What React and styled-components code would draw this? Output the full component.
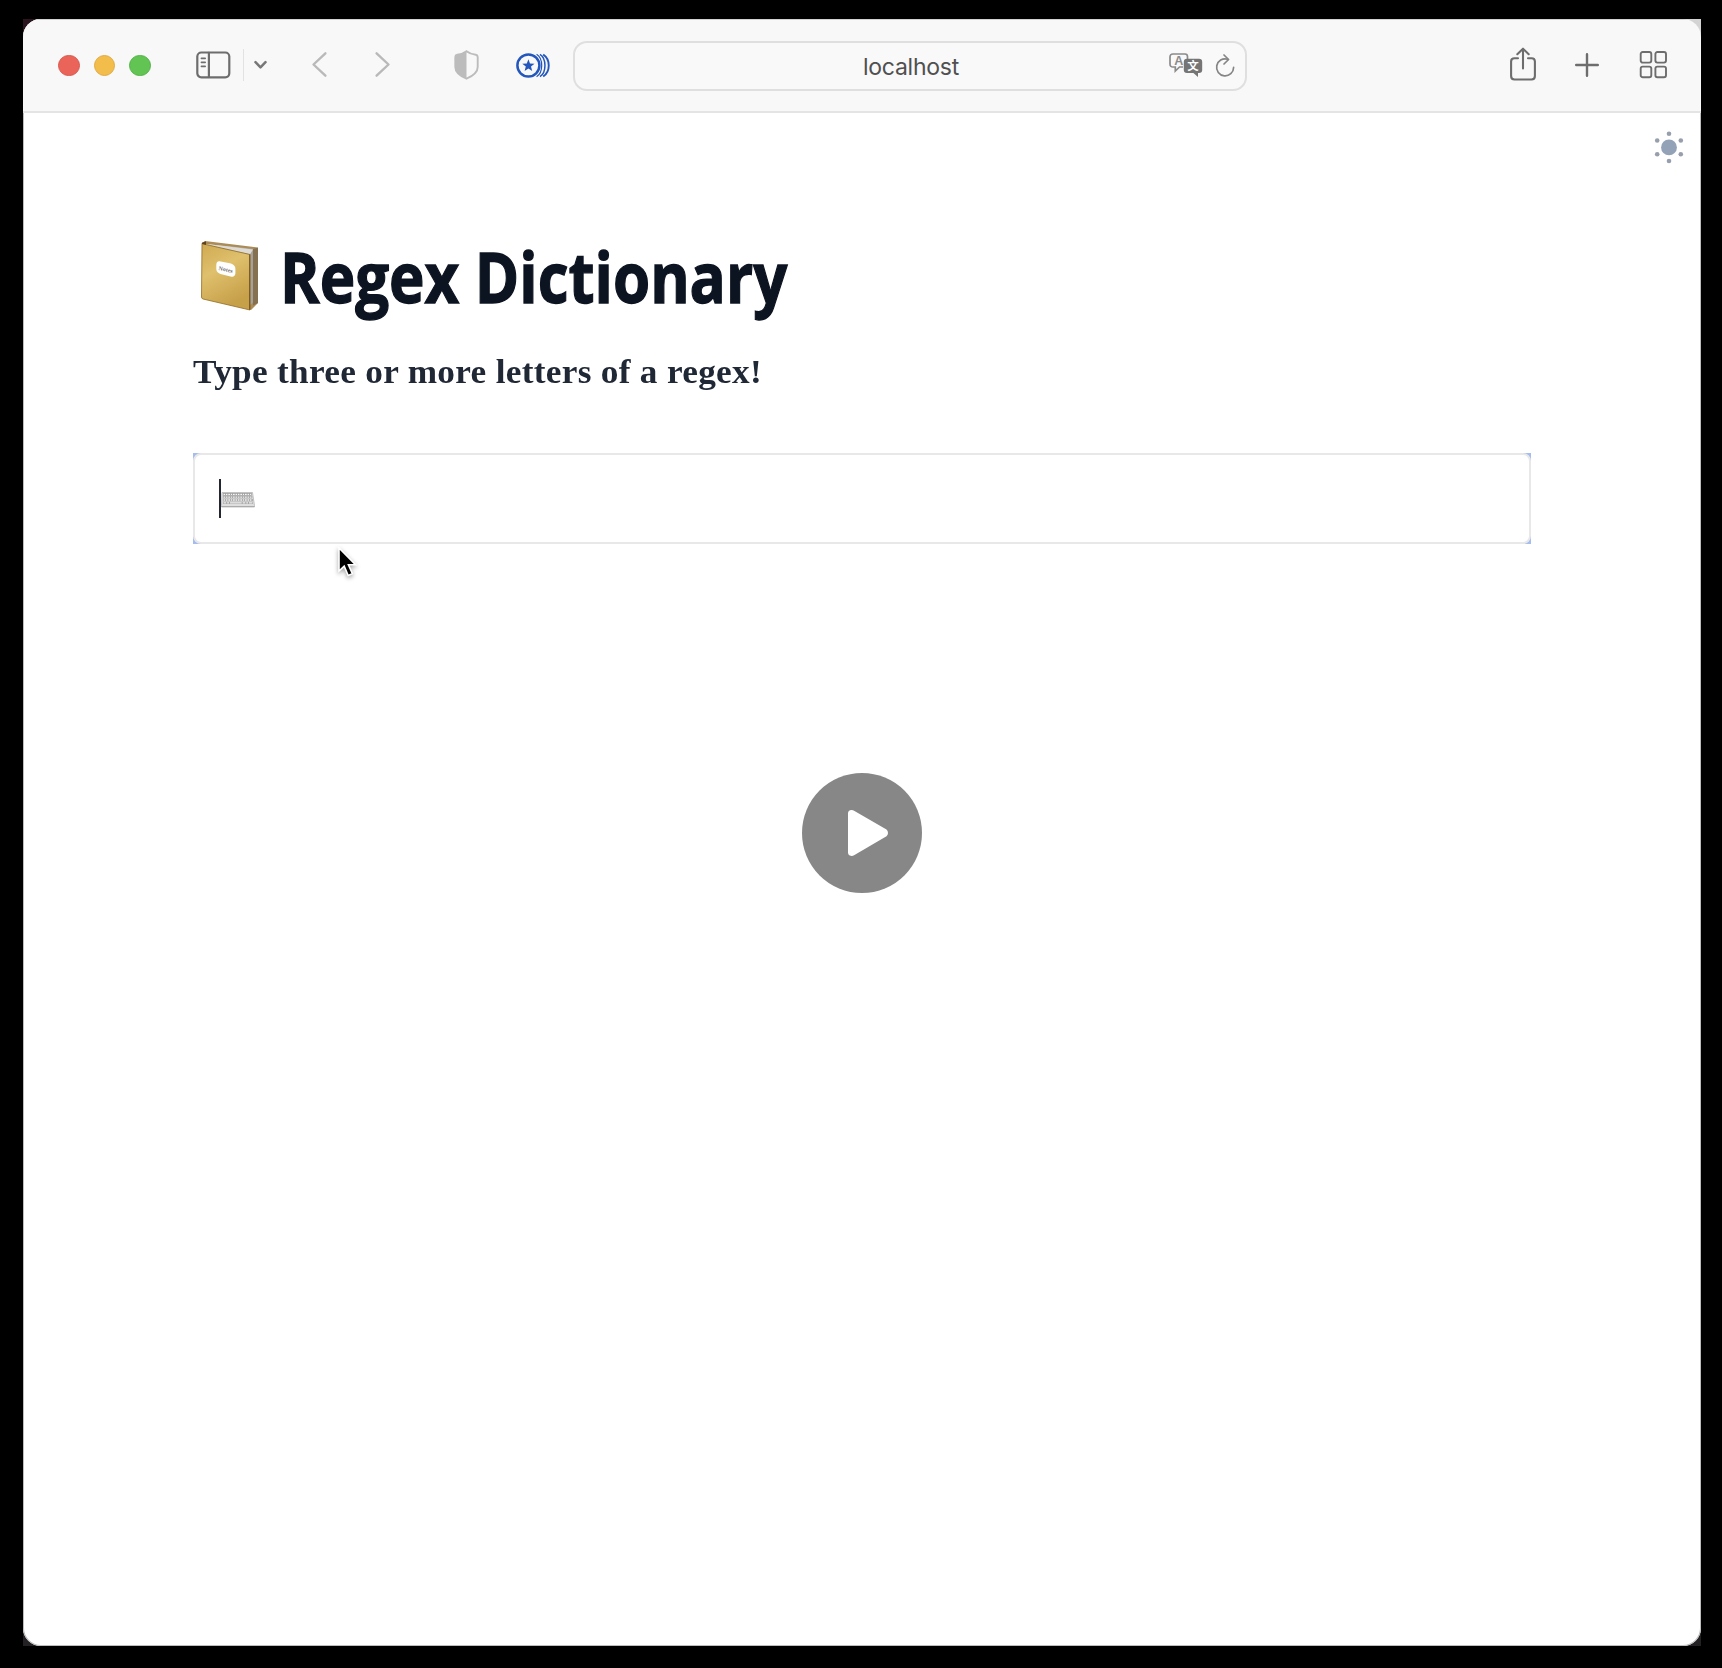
import React from "react";
import styled, { createGlobalStyle } from "styled-components";

const GlobalStyle = createGlobalStyle`
  * { box-sizing: border-box; }
  html, body { margin: 0; background: #000; }
  svg { display: block; flex: none; overflow: visible; }
`;

const Stage = styled.div`
  position: relative;
  width: 1722px;
  height: 1668px;
  padding: 19px 21px 22px 23px;
  background: #000;
  overflow: hidden;
`;

const Backdrop = styled.div`
  height: 1627px;
  background: linear-gradient(90deg, #2b1620 0 50%, #d4d4d4 50%) 0 0 / 100% 20px no-repeat, #232123;
`;

const Window = styled.main`
  display: flex;
  flex-direction: column;
  height: 100%;
  border-radius: 18px;
  background: #fff;
  overflow: hidden;
  box-shadow: inset 0 0 0 1px #bdbdbd;
`;

const Toolbar = styled.header`
  display: flex;
  align-items: center;
  height: 94px;
  flex: none;
  padding: 0 34px 2px 35px;
  background: #f8f8f8;
  border-bottom: 2px solid #e4e4e4;
  border-top: 1px solid #d2d2d2;
`;

const Lights = styled.div`
  display: flex;
  gap: 14px;
  padding-top: 2px;
`;

const Light = styled.span`
  width: 21.5px;
  height: 21.5px;
  border-radius: 50%;
  background: ${(p) => p.$color};
  border: 1px solid ${(p) => p.$edge};
`;

const ToolButton = styled.button`
  display: flex;
  margin: 0 0 0 ${(p) => p.$gap}px;
  padding: 0;
  border: 0;
  background: none;
  color: ${(p) => p.$color || "#6d6d6d"};
`;

const Divider = styled.span`
  width: 1px;
  height: 32px;
  margin-left: 12.5px;
  background: #e2e2e2;
`;

const AddressBar = styled.div`
  display: grid;
  grid-template-columns: 1fr auto 1fr;
  align-items: center;
  width: 674px;
  height: 50px;
  margin-left: 22.5px;
  margin-top: 2px;
  padding: 0 10px 0 12px;
  border: 2px solid #dfdfdf;
  border-radius: 14px;
  background: #f9f9f9;
`;

const Host = styled.span`
  grid-column: 2;
  padding-top: 3px;
  font: 400 23px/28px Inter, "Liberation Sans", sans-serif;
  letter-spacing: -0.25px;
  color: #505050;
`;

const AddressActions = styled.div`
  display: flex;
  justify-content: flex-end;
  align-items: center;
  gap: 12px;
`;

const TrailingTools = styled.div`
  display: flex;
  align-items: center;
  margin-left: auto;
`;

const Page = styled.section`
  display: flex;
  flex-direction: column;
  flex: 1;
  padding: 19px 17px 0;
`;

const ThemeRow = styled.div`
  display: flex;
  justify-content: flex-end;
  height: 32px;
`;

const Content = styled.div`
  width: 1338px;
  margin: 77px 0 0 153px;
`;

const Heading = styled.h1`
  display: flex;
  align-items: flex-start;
  height: 82px;
  margin: 0;
  padding-left: 8px;
  color: #0d1421;
`;

const HeadingText = styled.span`
  margin: -6px 0 0 21px;
  font: 700 70px/82px "Open Sans", sans-serif;
  white-space: nowrap;
  transform: scaleX(0.858);
  transform-origin: 0 50%;
  -webkit-text-stroke: 1.3px #0d1421;
`;

const Subtitle = styled.p`
  width: max-content;
  height: 40px;
  margin: 29px 0 0;
  font: 700 34px/40px "Liberation Serif", serif;
  letter-spacing: 0.3px;
  white-space: nowrap;
  color: #202836;
  transform: scaleX(1.036);
  transform-origin: 0 50%;
`;

const FieldCorners = styled.div`
  height: 91px;
  margin-top: 61px;
  background: #a5bcf0;
`;

const Field = styled.div`
  display: flex;
  align-items: center;
  height: 100%;
  padding-left: 23.5px;
  border: 2px solid #e8e8e8;
  border-radius: 8px;
  background: #fff;
`;

const Caret = styled.span`
  width: 2px;
  height: 39px;
  background: #222631;
`;

const Pointer = styled.svg`
  position: absolute;
  left: 336px;
  top: 545px;
  filter: drop-shadow(0 2px 2px rgba(0, 0, 0, 0.35));
`;

const PlayButton = styled.button`
  position: absolute;
  left: 802px;
  top: 773px;
  width: 120px;
  height: 120px;
  padding: 0;
  border: 0;
  border-radius: 50%;
  background: #878787;
`;

function Line({ w, h, sw = 2, children }) {
  return (
    <svg width={w} height={h} viewBox={`0 0 ${w} ${h}`} fill="none" stroke="currentColor"
      strokeWidth={sw} strokeLinecap="round" strokeLinejoin="round">
      {children}
    </svg>
  );
}

const SidebarIcon = () => (
  <Line w={34} h={27} sw={2.2}>
    <rect x="1.3" y="1.5" width="32" height="24.8" rx="4" />
    <path d="M12.9 1.9V25.9" />
    <path d="M5.4 7.4H9.2M5.4 11.4H9.2M5.4 15.4H9.2" strokeWidth="1.6" />
  </Line>
);

const ShieldIcon = () => (
  <svg width="25" height="30" viewBox="0 0 25 30">
    <path d="M12.5 1.3C10 3.3 6 4.5 3.2 4.8Q1.3 5.2 1.3 7V17C1.3 22 5 25.5 12.5 28.7C20 25.5 23.7 22 23.7 17V7Q23.7 5.2 21.8 4.8C19 4.5 15 3.3 12.5 1.3Z"
      fill="none" stroke="currentColor" strokeWidth="1.9" />
    <path d="M12.5 1.3C10 3.3 6 4.5 3.2 4.8Q1.3 5.2 1.3 7V17C1.3 22 5 25.5 12.5 28.7Z" fill="currentColor" />
  </svg>
);

const StarBadgeIcon = () => (
  <svg width="34" height="26" viewBox="0 0 34 26" fill="none" stroke="#2457bd">
    <circle cx="12.4" cy="13.5" r="11" strokeWidth="2.5" />
    <path d="M12.4 7.2L14 11.6L18.5 11.8L15 14.6L16.2 19L12.4 16.5L8.6 19L9.8 14.6L6.3 11.8L10.8 11.6Z" fill="#2457bd" stroke="none" />
    <path d="M20.6 2.3C27.4 6.5 27.4 20.5 20.6 24.7" strokeWidth="1.2" />
    <path d="M24 2.3C30.6 6.5 30.6 20.5 24 24.7" strokeWidth="1.5" />
    <path d="M27.2 2.5C34.6 7.3 34.6 19.7 27.2 24.5" strokeWidth="1.9" />
  </svg>
);

const TranslateIcon = () => (
  <svg width="34" height="26" viewBox="0 0 34 26">
    <path d="M4 1H16Q18.5 1 18.5 3.6V6M14 14H10.5L6.3 18V14H4Q1 14 1 11V4Q1 1 4 1" fill="none" stroke="#8b8b8b" strokeWidth="1.7" />
    <text x="9.8" y="12" textAnchor="middle" fontFamily="Liberation Sans, sans-serif" fontSize="12.5" fontWeight="700" fill="#8b8b8b">A</text>
    <path d="M18 5.8H30Q33.2 5.8 33.2 9V17Q33.2 20 30 20H29V24L24.4 20H18Q14.8 20 14.8 17V9Q14.8 5.8 18 5.8Z" fill="#757575" />
    <text x="24" y="17.2" textAnchor="middle" fontFamily="Noto Sans CJK SC, sans-serif" fontWeight="700" fontSize="11.5" fill="#fff">文</text>
  </svg>
);

const BookIcon = () => (
  <svg width="58" height="70" viewBox="0 0 58 70">
    <defs>
      <linearGradient id="cover" x1="0" y1="0" x2=".4" y2="1">
        <stop offset="0" stopColor="#cfa952" />
        <stop offset=".45" stopColor="#dfc06c" />
        <stop offset="1" stopColor="#c7a04a" />
      </linearGradient>
      <linearGradient id="pages" x1="0" y1="0" x2="1" y2="0">
        <stop offset="0" stopColor="#e8e6e3" />
        <stop offset="1" stopColor="#a29c95" />
      </linearGradient>
    </defs>
    <path d="M1 2L4 0L57 6.5V62L50 69L45 66L44 14Z" fill="#ab8c56" />
    <path d="M5 3L54 8V60L48 65V14Z" fill="url(#pages)" />
    <path d="M52 8L57 6.8V62L52 64.5Z" fill="#85714f" />
    <path d="M5 3L52 8.5L49 13.2Z" fill="#dedbd5" />
    <path d="M1 2.2L5 3.6L49 13.5V69L2 58Q.5 57.5 .5 56Z" fill="url(#cover)" stroke="#8f6c26" strokeWidth=".8" />
    <path d="M48.7 13.5V68.8" stroke="#70511e" strokeWidth="1" />
    <path d="M1 1.8L5 .3V4L1 3Z" fill="#5e4321" />
    <path d="M18.5 20.2L30 22.5Q34.5 24 34.4 28V32.6Q34 36.5 29.5 35.5L19.5 33Q15.3 31.5 15.3 27.8V24Q15.3 20 18.5 20.2Z" fill="#fff" />
    <text x="24.8" y="30.5" textAnchor="middle" transform="rotate(12 24.8 28)" fontFamily="Liberation Serif, serif" fontSize="6" fontWeight="700" fill="#777">Notes</text>
  </svg>
);

const keyRows = [3.4, 6.2, 9, 11.8];

const KeyboardIcon = () => (
  <svg width="34" height="16" viewBox="0 0 34 16">
    <path d="M1 1.5H31.5L33.5 14.5V16H.5V14.5Z" fill="#dedede" stroke="#b6b6b6" strokeWidth=".8" />
    {keyRows.map((y, i) => (
      <path key={y} d={`M2 ${y}H${30.8 + i * 0.4}`} stroke={i === 0 ? "#757575" : "#8d8d8d"} strokeWidth="2.1" />
    ))}
    {keyRows.map((y, i) => (
      <path key={y} d={`M2.4 ${y}H${30.4 + i * 0.4}`} stroke="#f6f6f6" strokeWidth="1.3" strokeDasharray={i === 3 ? "3 .7 2 .7 12 .7" : "1.8 .6"} />
    ))}
    <path d="M.6 15.5H33.4" stroke="#aaa" strokeWidth="1" />
  </svg>
);

const sunDots = [[15, 1.8], [26.8, 8.5], [26.8, 22.2], [15, 29], [3.2, 22.2], [3.2, 8.5]];

const SunIcon = () => (
  <svg width="30" height="31" viewBox="0 0 30 31">
    <circle cx="15" cy="15.4" r="7.9" fill="#94a2b8" />
    {sunDots.map(([x, y]) => <circle key={`${x}-${y}`} cx={x} cy={y} r="2.3" fill="#979fac" />)}
  </svg>
);

export default function App() {
  return (
    <Stage>
      <GlobalStyle />
      <Backdrop>
        <Window>
          <Toolbar>
            <Lights>
              <Light $color="#eb6459" $edge="#d9584e" />
              <Light $color="#f3bd4b" $edge="#e0aa42" />
              <Light $color="#61c453" $edge="#55b348" />
            </Lights>
            <ToolButton $gap={45.5} aria-label="Sidebar"><SidebarIcon /></ToolButton>
            <Divider />
            <ToolButton $gap={10.2} $color="#777">
              <Line w={13} h={9} sw={2.5}><path d="M1.5 2.2L6.5 7.4L11.5 2.2" /></Line>
            </ToolButton>
            <ToolButton $gap={45.3} $color="#b9b9b9">
              <Line w={15} h={25} sw={2.4}><path d="M13.4 1.3L1.5 12.5L13.4 23.7" /></Line>
            </ToolButton>
            <ToolButton $gap={48} $color="#b9b9b9">
              <Line w={15} h={25} sw={2.4}><path d="M1.6 1.3L13.5 12.5L1.6 23.7" /></Line>
            </ToolButton>
            <ToolButton $gap={64} $color="#bcbcbc"><ShieldIcon /></ToolButton>
            <ToolButton $gap={37.5}><StarBadgeIcon /></ToolButton>
            <AddressBar>
              <Host>localhost</Host>
              <AddressActions>
                <TranslateIcon />
                <ToolButton $gap={0} $color="#858585">
                  <Line w={20} h={24} sw={1.7}>
                    <path d="M12.5 5.2A8.5 8.5 0 1 0 18.6 13.4" />
                    <path d="M9 1L13.6 5.5L9 10" />
                  </Line>
                </ToolButton>
              </AddressActions>
            </AddressBar>
            <TrailingTools>
              <ToolButton $gap={0}>
                <Line w={26} h={34} sw={2.1}>
                  <path d="M8 10.2H4.5Q1.1 10.2 1.1 13.5V28Q1.1 31.5 4.5 31.5H21.5Q24.9 31.5 24.9 28V13.5Q24.9 10.2 21.5 10.2H18" />
                  <path d="M13 20.5V1M7.3 6.2L13 .7L18.7 6.2" />
                </Line>
              </ToolButton>
              <ToolButton $gap={39}>
                <Line w={24} h={24} sw={2.4}><path d="M12 1.2V22.8M1.2 12H22.8" /></Line>
              </ToolButton>
              <ToolButton $gap={41}>
                <Line w={27} h={27} sw={1.9}>
                  <rect x=".7" y="1" width="10.6" height="10.6" rx="2" />
                  <rect x="15.4" y="1" width="10.6" height="10.6" rx="2" />
                  <rect x=".7" y="15.6" width="10.6" height="10.6" rx="2" />
                  <rect x="15.4" y="15.6" width="10.6" height="10.6" rx="2" />
                </Line>
              </ToolButton>
            </TrailingTools>
          </Toolbar>
          <Page>
            <ThemeRow><SunIcon /></ThemeRow>
            <Content>
              <Heading>
                <BookIcon />
                <HeadingText>Regex Dictionary</HeadingText>
              </Heading>
              <Subtitle>Type three or more letters of a regex!</Subtitle>
              <FieldCorners>
                <Field>
                  <Caret />
                  <KeyboardIcon />
                </Field>
              </FieldCorners>
            </Content>
          </Page>
        </Window>
      </Backdrop>
      <Pointer width="24" height="34" viewBox="0 0 24 34">
        <path d="M3 3V26L8.2 21.2L12.2 30.5L16.4 28.7L12.4 19.7H19.5Z" fill="#000" stroke="#fff" strokeWidth="1.6" />
      </Pointer>
      <PlayButton aria-label="Play">
        <svg width="120" height="120" viewBox="0 0 120 120">
          <path d="M46 40.5Q46 37 49.5 37Q51 37 52.5 38L84.5 56.5Q86 57.5 86 60Q86 62 84.5 63.2L52.5 82Q51 83 49.5 83Q46 82.5 46 79.5Z" fill="#fff" />
        </svg>
      </PlayButton>
    </Stage>
  );
}
